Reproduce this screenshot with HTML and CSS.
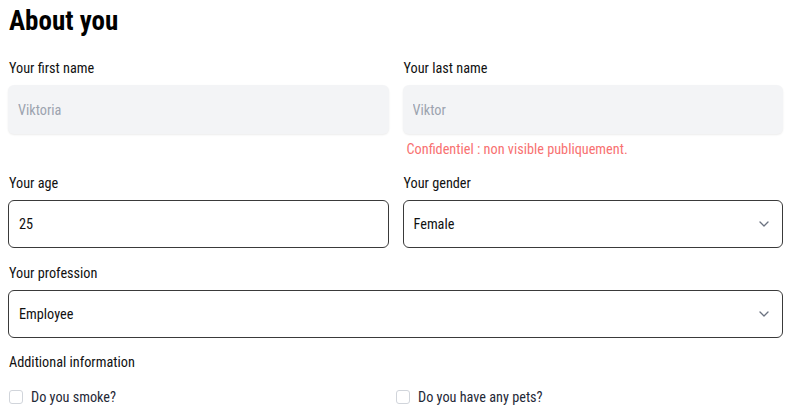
FILE: index.html
```html
<!DOCTYPE html>
<html lang="en">
<head>
    <meta charset="UTF-8">
    <meta name="viewport" content="width=device-width, initial-scale=1.0">
    <title>About you</title>
    <link rel="stylesheet" href="styles.css">
</head>
<body>

<div class="container">
    <h1>About you</h1>

    <div class="row">
        <div class="form-group">
            <label for="first-name">Your first name</label>
            <input type="text" id="first-name" class="locked" value="Viktoria" disabled>
        </div>
        <div class="form-group">
            <label for="last-name">Your last name</label>
            <input type="text" id="last-name" class="locked" value="Viktor" disabled>
            <p class="note">Confidentiel : non visible publiquement.</p>
        </div>
    </div>

    <div class="row">
        <div class="form-group">
            <label for="age">Your age</label>
            <input type="text" id="age" value="25">
        </div>
        <div class="form-group">
            <label for="gender">Your gender</label>
            <div class="select">
                <select id="gender">
                    <option>Female</option>
                    <option>Male</option>
                </select>
                <svg class="chevron" width="10" height="6" viewBox="0 0 10 6"><path d="M1 1 L5 5 L9 1" fill="none" stroke="#6b7280" stroke-width="1.3" stroke-linecap="round" stroke-linejoin="round"/></svg>
            </div>
        </div>
    </div>

    <div class="form-group full">
        <label for="profession">Your profession</label>
        <div class="select">
            <select id="profession">
                <option>Employee</option>
                <option>Student</option>
            </select>
            <svg class="chevron" width="10" height="6" viewBox="0 0 10 6"><path d="M1 1 L5 5 L9 1" fill="none" stroke="#6b7280" stroke-width="1.3" stroke-linecap="round" stroke-linejoin="round"/></svg>
        </div>
    </div>

    <div class="extra">
        <span class="extra-title">Additional information</span>
        <div class="checks">
            <label class="check"><input type="checkbox"><span class="box"></span>Do you smoke?</label>
            <label class="check"><input type="checkbox"><span class="box"></span>Do you have any pets?</label>
        </div>
    </div>
</div>

</body>
</html>
```

FILE: styles.css
```css
body {
    margin: 0;
    padding: 8px;
    font-family: "Roboto Condensed", "Liberation Sans Narrow", Roboto, sans-serif;
    font-stretch: condensed;
    color: #111;
    background: #fff;
}

.container {
    width: 775px;
}

h1 {
    margin: -3px 0 21px 1px;
    font-size: 27px;
    line-height: 32px;
    font-weight: 700;
    color: #000;
}

.row {
    display: grid;
    grid-template-columns: 1fr 1fr;
    column-gap: 14px;
}

.form-group {
    margin-bottom: 15px;
}

.form-group label {
    display: block;
    font-size: 14.25px;
    line-height: 20px;
    margin: 0 0 7px 1px;
    color: #111;
}

.form-group input,
.form-group select {
    width: 100%;
    height: 48px;
    padding: 0 10px;
    font: inherit;
    font-size: 14.25px;
    color: #111;
    border: 1px solid #3a3a3a;
    border-radius: 6px;
    background: #fff;
    box-sizing: border-box;
    outline: none;
    appearance: none;
}

.form-group input.locked {
    height: 49px;
    border: none;
    background: #f3f4f6;
    color: #9ca3af;
    box-shadow: 0 1px 2px rgba(0, 0, 0, 0.08);
}

.note {
    margin: 6px 0 0 4px;
    font-size: 14.25px;
    line-height: 18px;
    color: #f87171;
}

.select {
    position: relative;
}

.chevron {
    position: absolute;
    right: 14px;
    top: 21px;
    pointer-events: none;
}

.full {
    margin-bottom: 14px;
}

.extra-title {
    display: block;
    margin-left: 1px;
    font-size: 14.25px;
    line-height: 20px;
    color: #111;
}

.checks {
    display: grid;
    grid-template-columns: 1fr 1fr;
    width: 774px;
    margin-top: 15px;
}

.check {
    display: flex;
    align-items: center;
    font-size: 14.25px;
    line-height: 20px;
    color: #1f2937;
}

.check input {
    display: none;
}

.check .box {
    width: 12px;
    height: 12px;
    margin: 0 8px 0 1px;
    border: 1px solid #d1d5db;
    border-radius: 3px;
    background: #fff;
}
```
